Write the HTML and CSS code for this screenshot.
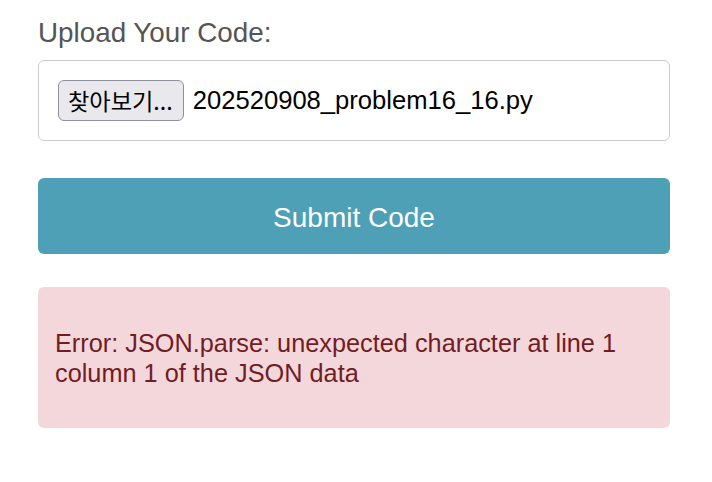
FILE: index.html
```html
<!DOCTYPE html>
<html lang="ko">
<head>
<meta charset="utf-8">
<link rel="stylesheet" href="styles.css">
<title>Upload</title>
</head>
<body>
<main class="page">
  <label class="label">Upload Your Code:</label>
  <div class="file-box">
    <span class="file-btn">찾아보기...</span>
    <span class="file-name">202520908_problem16_16.py</span>
  </div>
  <button class="submit" type="button">Submit Code</button>
  <div class="alert">
    <p class="alert-text">Error: JSON.parse: unexpected character at line 1 column 1 of the JSON data</p>
  </div>
</main>
</body>
</html>
```
FILE: styles.css
```css
html, body {
  margin: 0;
  padding: 0;
  background: #ffffff;
}
body {
  font-family: "Liberation Sans", Arial, sans-serif;
}
.page {
  width: 632px;
  margin-left: 38px;
  padding-top: 17px;
  display: flex;
  flex-direction: column;
}
.label {
  font-size: 27.8px;
  line-height: 31px;
  color: #555555;
  margin-bottom: 12px;
}
.file-box {
  display: flex;
  align-items: center;
  gap: 9px;
  border: 1px solid #cccccc;
  border-radius: 6px;
  padding: 19px 19px;
}
.file-btn {
  font-family: "Noto Sans CJK KR", "Liberation Sans", sans-serif;
  font-size: 23.2px;
  line-height: 39px;
  height: 39px;
  padding: 0 10px 0 9px;
  background: #e9e9ed;
  border: 1px solid #8f8f9d;
  border-radius: 6px;
  color: #000;
  display: flex;
  align-items: center;
}
.file-name {
  font-size: 25.6px;
  color: #000;
}
.submit {
  margin-top: 37px;
  height: 76px;
  padding: 3px 0 0;
  border: none;
  border-radius: 6px;
  background: #4da0b5;
  color: #ffffff;
  font-family: "Liberation Sans", Arial, sans-serif;
  font-size: 28px;
  cursor: pointer;
}
.alert {
  margin-top: 33px;
  background: #f4d7db;
  border-radius: 6px;
  padding: 42px 17px 0;
  color: #721c24;
  height: 141px;
  box-sizing: border-box;
}
.alert-text {
  margin: 0;
  font-size: 25.3px;
  line-height: 29.5px;
}
```
